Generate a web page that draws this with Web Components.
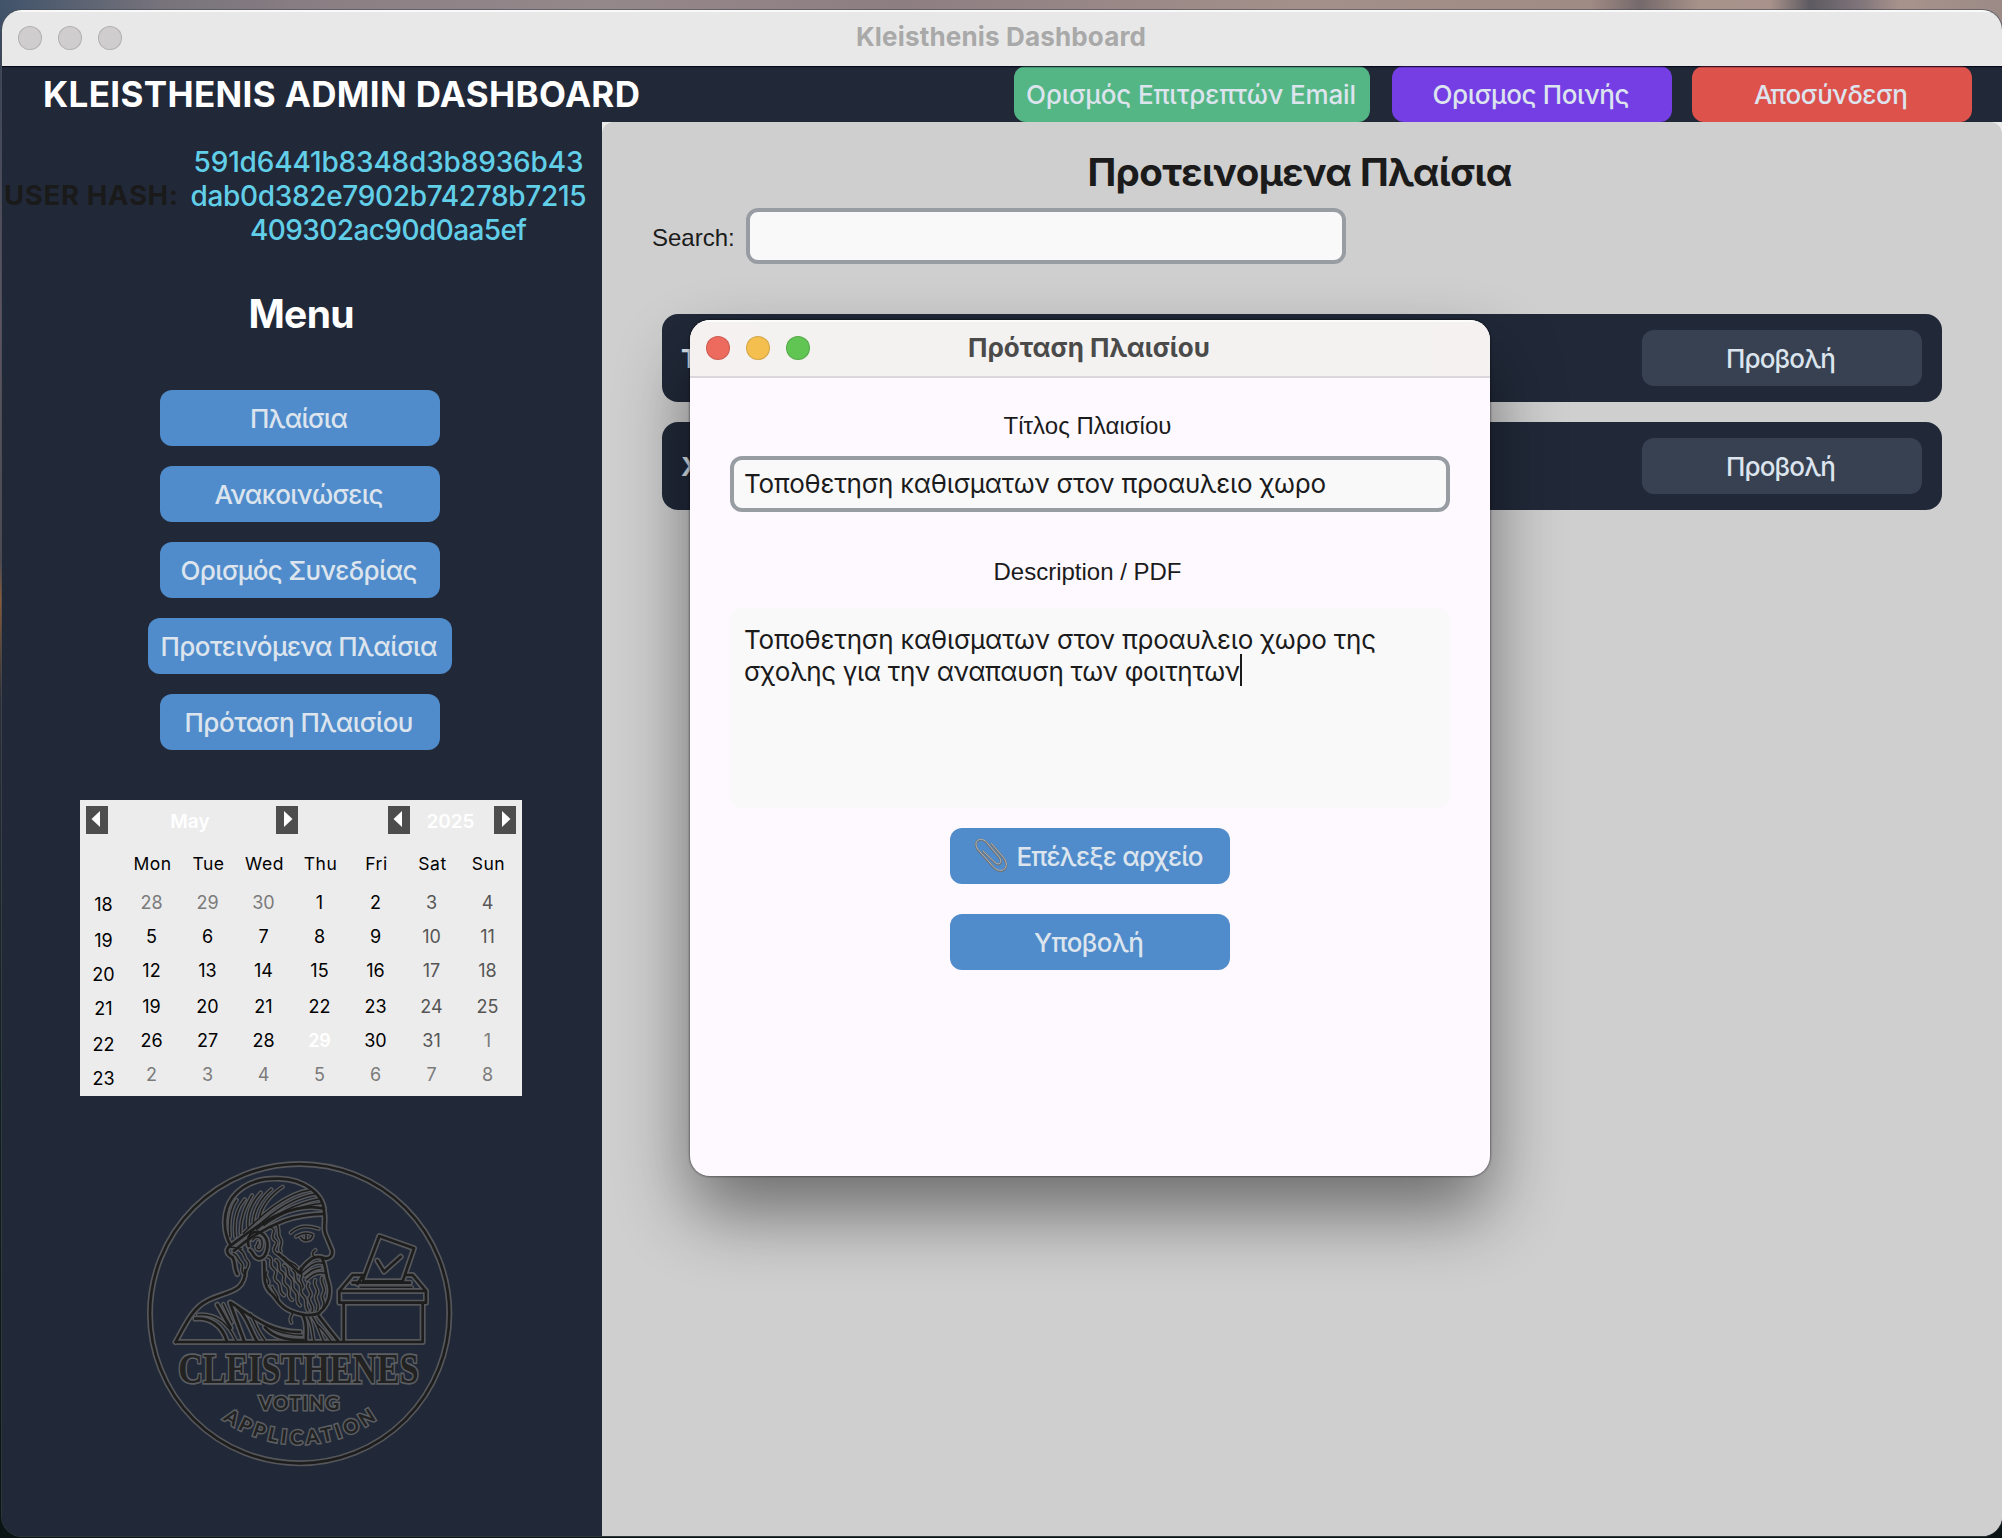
<!DOCTYPE html>
<html lang="el">
<head>
<meta charset="utf-8">
<title>Kleisthenis Dashboard</title>
<style>
html,body{margin:0;padding:0}
body{width:2002px;height:1538px;overflow:hidden;position:relative;font-family:Inter,"Liberation Sans",sans-serif;
background:linear-gradient(180deg,transparent 0,transparent 12px,#3a4458 60px,#5d5560 320px,#4c4a50 560px,#8a5a35 600px,#2b3038 700px,#10201f 1100px,#0a1414 1538px) 0 0/3px 100% no-repeat,
linear-gradient(180deg,transparent 1500px,#0c1516 1510px),
linear-gradient(90deg,#40536a 0,#77737b 160px,#8b7f84 330px,#95888b 600px,#8d7e82 900px,#a3908a 1300px,#a08b84 1590px,#75696b 1640px,#a8938a 1700px,#a8928b 1770px,#5d5a61 1810px,#80757a 1860px,#a8938c 1900px,#9b8a86 2002px)}
</style>
</head>
<body>
<desk-window>
  <title-bar slot="title" label="Kleisthenis Dashboard" w="290" inactive></title-bar>
  <app-header slot="header"></app-header>
  <side-bar slot="side"></side-bar>
  <frames-panel slot="main"></frames-panel>
</desk-window>
<proposal-dialog></proposal-dialog>

<script>
const define = (name, html, init) => customElements.define(name, class extends HTMLElement {
  connectedCallback() {
    if (this.shadowRoot) return;
    const root = this.attachShadow({ mode: 'open' });
    root.innerHTML = typeof html === 'function' ? html(this) : html;
    if (init) init(this, root);
  }
});

/* Single line of text, tracked so that it spans exactly `w` pixels. */
define('fit-text', el => `<style>:host{display:inline-block;vertical-align:top}span{display:block;width:max-content;white-space:pre}</style><span>${el.getAttribute('t')}</span>`, (el, root) => {
  const span = root.querySelector('span');
  const w = +el.getAttribute('w');
  if (!w) return;
  const gap = (w - span.getBoundingClientRect().width) / Math.max(1, el.getAttribute('t').length - 1);
  span.style.letterSpacing = gap + 'px';
  span.style.marginRight = -gap + 'px';
});

define('app-button', el => `
  <style>
    :host{display:flex;align-items:center;justify-content:center;box-sizing:border-box;flex:none;
      width:var(--w,280px);height:56px;border-radius:12px;background:var(--bg,#508ccb);
      color:#dce4ee;font-size:26px;font-weight:450;line-height:54px;padding:2px 2px 0 0}
  </style>
  <slot></slot><fit-text t="${el.getAttribute('label')}" w="${el.getAttribute('w')}"></fit-text>`);

define('title-bar', el => `
  <style>
    :host{display:grid;grid-template-columns:200px 1fr 200px;align-items:center;height:56px;box-sizing:border-box;
      background:${el.hasAttribute('inactive') ? '#e8e8e8' : 'linear-gradient(90deg,#f6f1f1,#f3f2f0 12%,#f3f2f0 90%,#f6f1f1)'};
      box-shadow:inset 0 2px 0 rgba(255,255,255,.75);color:${el.hasAttribute('inactive') ? '#a9a9a9' : '#4a4a4a'};
      font-weight:700;font-size:26px}
    .lights{display:flex;gap:16px;padding-left:16px}
    i{width:24px;height:24px;border-radius:50%;box-sizing:border-box;border:1px solid rgba(0,0,0,.14)}
    .lbl{text-align:center;line-height:32px;margin:${el.hasAttribute('inactive') ? -3 : -1}px 2px 0 0}
  </style>
  <div class="lights">${(el.hasAttribute('inactive') ? ['#cfcdcd', '#cfcdcd', '#cfcdcd'] : ['#ed6a5e', '#f5bf4f', '#61c554'])
    .map(c => `<i style="background:${c}"></i>`).join('')}</div>
  <div class="lbl"><fit-text t="${el.getAttribute('label')}" w="${el.getAttribute('w')}"></fit-text></div>`);

define('desk-window', `
  <style>
    :host{display:flex;flex-direction:column;margin:10px 0 0 2px;height:1526px;border-radius:20px;overflow:hidden;
      background:#212939;box-shadow:0 0 0 1px rgba(70,75,85,.6)}
    .body{display:flex;flex:1}
    slot{display:contents}
  </style>
  <slot name="title"></slot><slot name="header"></slot>
  <div class="body"><slot name="side"></slot><slot name="main"></slot></div>`,
  el => { document.body.style.display = 'flow-root'; });

define('app-header', `
  <style>
    :host{display:flex;height:56px;align-items:center;background:#212939;padding:0 30px 0 41px;color:#fff;position:relative}
    h1{margin:0;font-size:35px;line-height:56px;font-weight:700;flex:1;height:56px}
    .a{--bg:#55b685;--w:356px;margin-right:22px}
    .b{--bg:#743ee4;margin-right:20px}
    .c{--bg:#de524c}
    .line{position:absolute;left:0;right:0;top:0;height:1px;background:rgba(0,0,20,.75)}
    .line::after{content:"";position:absolute;inset:1px 0 -1px;background:rgba(0,0,20,.18)}
  </style>
  <h1><fit-text t="KLEISTHENIS ADMIN DASHBOARD" w="597"></fit-text></h1>
  <app-button class="a" label="Ορισμός Επιτρεπτών Email" w="330"></app-button>
  <app-button class="b" label="Ορισμος Ποινής" w="197"></app-button>
  <app-button class="c" label="Αποσύνδεση" w="154"></app-button>
  <div class="line"></div>`);

define('side-bar', `
  <style>
    :host{display:flex;flex-direction:column;width:600px;background:#212939}
    .hash{display:flex;align-items:center;height:102px;margin-top:23px;padding-left:2px}
    .k{color:#1a1a1a;font-weight:700;font-size:27.500px;width:184px;margin-bottom:3px}
    .v{color:#62cfe9;font-size:28px;font-weight:450;line-height:34px;text-align:center;display:flex;flex-direction:column;align-items:center;width:401px}
    h2{margin:43px 0 0 -1px;text-align:center;color:#fff;font-size:39px;line-height:48px;font-weight:700}
    nav{display:flex;flex-direction:column;align-items:center;gap:20px;margin-top:52px;width:596px}
    cal-month{margin:50px 0 0 78px}
    app-logo{margin:44px 0 0 128px}
  </style>
  <div class="hash"><div class="k"><fit-text t="USER HASH:" w="174"></fit-text></div>
    <div class="v"><fit-text t="591d6441b8348d3b8936b43" w="390"></fit-text><fit-text t="dab0d382e7902b74278b7215" w="396"></fit-text><fit-text t="409302ac90d0aa5ef" w="277"></fit-text></div></div>
  <h2><fit-text t="Menu" w="106"></fit-text></h2>
  <nav>
    <app-button label="Πλαίσια" w="98"></app-button>
    <app-button label="Ανακοινώσεις" w="169"></app-button>
    <app-button label="Ορισμός Συνεδρίας" w="237"></app-button>
    <app-button label="Προτεινόμενα Πλαίσια" w="277" style="--w:304px"></app-button>
    <app-button label="Πρόταση Πλαισίου" w="229"></app-button>
  </nav>
  <cal-month></cal-month>
  <app-logo></app-logo>`);

define('cal-month', () => {
  const days = [28,29,30,1,2,3,4,5,6,7,8,9,10,11,12,13,14,15,16,17,18,19,20,21,22,23,24,25,26,27,28,29,30,31,1,2,3,4,5,6,7,8];
  const cls = i => (i < 3 || i > 33) ? 'o' : i === 31 ? 't' : i % 7 > 4 ? 'w' : '';
  const arrow = d => `<svg width="22" height="28" viewBox="0 0 22 28"><rect width="22" height="28" fill="#4d4d4d"/><path fill="#fff" d="${d}"/></svg>`;
  const L = 'M14 5v16L5.500 13z', R = 'M8 5v16L16.500 13z';
  return `
  <style>
    :host{display:block;width:442px;height:296px;background:#ececec;color:#000;font-size:17.500px;box-sizing:border-box;padding:6px 6px 0}
    .top{display:flex;height:28px;color:#fff;font-weight:600;font-size:19px;line-height:31px;text-align:center}
    svg{flex:none}
    .m{width:168px;box-sizing:border-box;padding-right:4px}.y{width:84px;box-sizing:border-box;padding-right:3px}.gap{width:90px}
    .names{display:grid;grid-template-columns:repeat(7,56px);padding-left:38px;margin-top:19px;line-height:22px;text-align:center;letter-spacing:.5px}
    .names span{margin-left:1px}
    .grid{display:flex;margin-top:16px}
    .wk{display:grid;grid-template-rows:36px 34px 34px 36px 34px 34px;width:37px;margin-top:2px;text-align:center;padding-right:2px;box-sizing:border-box;line-height:24px}
    .d{display:grid;grid-template:34px 34px 36px 34px 34px 34px/repeat(7,56px);text-align:center;line-height:24px;margin-left:.5px}
    .wk,.d{font-size:18px}
    .o{color:#7b7b7b}.w{color:#555}.t{color:#fff;font-weight:600}
  </style>
  <div class="top">${arrow(L)}<span class="m">May</span>${arrow(R)}<span class="gap"></span>${arrow(L)}<span class="y">2025</span>${arrow(R)}</div>
  <div class="names">${['Mon','Tue','Wed','Thu','Fri','Sat','Sun'].map(n => `<span>${n}</span>`).join('')}</div>
  <div class="grid"><div class="wk">${[18,19,20,21,22,23].map(n => `<span>${n}</span>`).join('')}</div>
  <div class="d">${days.map((n, i) => `<span class="${cls(i)}">${n}</span>`).join('')}</div></div>`;
});

define('app-logo', `
  <style>
    :host{display:block;width:340px;height:340px}
    svg{display:block}
    .halo{stroke:#55575a}.ink{stroke:#1d1d1d}
    g{fill:none;stroke-linecap:round;stroke-linejoin:round}
    text{font-weight:700;stroke:#5c5f62;stroke-width:9px;paint-order:stroke;fill:#222}
    .serif{font-family:"Liberation Serif",serif;stroke-width:10px}
    .sans{font-family:Lato,sans-serif}
  </style>
  <svg width="340" height="340" viewBox="0 0 1020 1020">
    <defs>
      <g id="big"><circle cx="509" cy="521" r="449"/>
        <path d="M137 606H878V488M641 490V602M628 453H888V488H628ZM628 453L668 405H700M828 405H848L888 453M668 428H840M682 432L695 412"/>
        <path d="M700 416L748 288L852 325L818 424H700Z"/><path d="M742 362L762 395L812 350"/>
        <path d="M137 606C170 545 192 500 232 482C290 452 345 460 346 390M322 402C310 380 318 368 308 352C286 340 288 326 302 316C276 270 280 210 308 172C340 130 392 114 448 116C520 118 580 160 582 212C588 250 578 262 586 282L606 330C610 348 600 354 588 356"/>
        <path d="M302 316C350 282 400 240 450 222C500 202 545 196 582 206M312 332C360 290 410 262 462 242C510 226 545 222 578 222"/>
        <path d="M356 318C346 282 380 262 402 286C420 306 414 352 388 356C368 354 372 338 360 330"/>
        <path d="M588 356C574 350 560 346 546 356C524 372 512 384 510 400L446 342M574 352C590 376 584 400 596 430C606 470 590 500 566 520C540 532 500 520 480 512C446 500 440 470 420 456C396 430 406 400 402 366"/>
        <path d="M302 488C360 524 420 578 510 576M300 488L342 602M262 494L302 564M320 500C354 530 360 570 380 602M196 536C240 532 276 556 290 602M405 562C430 590 470 602 520 600M518 524C534 550 526 580 528 602M566 528C590 560 606 580 624 602"/>
      </g>
      <g id="fine">
        <path d="M482 278C510 252 540 258 566 266M498 290C520 276 536 278 548 284C546 304 520 306 512 292M528 284V300"/>
        <path d="M300 290C296 250 298 210 320 180M316 290C310 240 320 205 344 178M332 280C330 232 346 200 366 166M354 262C350 220 368 184 392 158M370 250C370 216 390 176 424 148M388 236C394 200 420 166 458 140M340 280C400 220 470 160 540 150M360 280C420 220 490 172 556 162M380 268C430 226 500 188 570 176M402 256C450 220 510 198 576 190"/>
        <path d="M368 300C376 286 396 290 396 308C398 326 388 334 380 326C374 318 386 314 384 306M310 340C326 346 322 360 334 368C344 378 330 388 340 400M330 330C348 340 340 354 352 362C362 372 352 384 348 392M300 322C320 320 326 330 334 326"/>
        <path d="M422 262C446 270 416 290 434 300C452 312 420 324 436 338C452 352 462 346 470 360C480 372 494 368 502 382M440 252C452 268 440 280 450 294C462 310 444 320 452 334M414 350C436 356 412 374 430 386C450 398 422 412 440 424C460 436 440 452 462 466M438 360C458 370 436 384 454 396C474 408 450 422 468 436C488 450 464 466 486 480M462 376C482 384 464 402 480 412C498 426 478 438 494 452C512 466 492 482 510 496M488 390C506 402 488 414 504 428C522 440 504 456 520 468C536 480 520 496 534 512M410 396C400 412 424 420 414 432M426 440C430 456 446 462 444 480"/>
        <path d="M514 400C536 380 556 362 580 370M524 408C542 392 552 386 572 384M530 420C552 398 570 396 584 400M536 430C524 446 552 454 540 470C528 484 556 494 546 514M556 420C546 436 572 448 560 464C548 478 574 490 562 512M576 412C568 430 592 444 580 460C568 476 592 484 578 504M512 384C506 396 520 400 514 412C506 424 524 432 518 444"/>
        <path d="M486 516C492 526 474 530 484 548M362 522C376 548 380 570 404 600M384 540C420 566 450 584 516 586M534 532C548 552 546 580 552 602M548 532C566 556 568 580 580 602M560 552C580 570 592 586 602 602M280 492L306 548M204 524C250 520 290 540 318 602M556 330C546 336 546 344 552 350M690 442H846"/>
      </g>
      <path id="arc" d="M180 735A393 393 0 0 0 838 735"/>
    </defs>
    <g class="halo" stroke-width="18"><use href="#big"/></g>
    <g class="halo" stroke-width="13"><use href="#fine"/></g>
    <g class="ink" stroke-width="8"><use href="#big"/></g>
    <g class="ink" stroke-width="4.500"><use href="#fine"/></g>
    <text class="serif" x="145" y="728" font-size="126" textLength="721" lengthAdjust="spacingAndGlyphs">CLEISTHENES</text>
    <text class="sans" x="386" y="811" font-size="58" textLength="242">VOTING</text>
    <text class="sans" font-size="58" text-anchor="middle"><textPath href="#arc" startOffset="50%" textLength="494">APPLICATION</textPath></text>
  </svg>`);

define('frames-panel', `
  <style>
    :host{display:block;width:1400px;background:#ebebeb}
    .p{display:flex;flex-direction:column;height:100%;background:#cfcfcf;border-radius:12px 12px 0 0;box-sizing:border-box;padding:26px 60px 0}
    h2{margin:0 0 0 -4px;font-size:38.500px;line-height:48px;color:#1b1b1b;text-align:center;font-weight:700}
    .s{display:flex;align-items:center;margin:12px 0 0 -10px;font:24px "Liberation Sans",sans-serif;color:#1b1b1b}
    .s span{width:94px;padding-top:3px}
    .box{width:600px;height:56px;box-sizing:border-box;border:4px solid #979da2;border-radius:12px;background:#f9f9fa}
    frame-row{margin-bottom:20px}
    .rows{margin-top:50px}
  </style>
  <div class="p">
    <h2><fit-text t="Προτεινομενα Πλαίσια" w="425"></fit-text></h2>
    <div class="s"><span>Search:</span><div class="box"></div></div>
    <div class="rows"><frame-row name="Τ"></frame-row><frame-row name="Χ"></frame-row></div>
  </div>`);

define('frame-row', el => `
  <style>
    :host{display:flex;align-items:center;justify-content:space-between;height:88px;box-sizing:border-box;padding:0 20px 0 19px;
      border-radius:16px;background:#212939;color:#dce4ee;font-size:26px;font-weight:700}
    app-button{--bg:#374151}
  </style>
  <span>${el.getAttribute('name')}</span><app-button label="Προβολή" w="110"></app-button>`);

define('proposal-dialog', `
  <style>
    :host{position:absolute;left:690px;top:320px;width:800px;height:856px;border-radius:20px;background:#fdf9ff;
      box-shadow:0 0 2px 1px rgba(0,0,0,.35),0 36px 72px rgba(0,0,0,.48);color:#1b1b1b}
    .in{display:flex;flex-direction:column;align-items:center;height:100%;border-radius:20px;overflow:hidden}
    title-bar{width:100%;border-bottom:0}
    hr{border:0;margin:0;height:2px;width:100%;background:#dad7dc}
    label{font:24px/28px "Liberation Sans",sans-serif;margin-right:5px}
    .t1{margin-top:34px}
    .inp{width:720px;height:56px;box-sizing:border-box;border:4px solid #979da2;border-radius:12px;background:#f9f9fa;
      margin-top:16px;padding-left:10px;font-size:26px;line-height:47px}
    .t2{margin-top:46px}
    .ta{width:720px;height:200px;border-radius:12px;background:#f9f9fa;margin:22px 0 20px;box-sizing:border-box;
      padding:14px;font-size:26px;line-height:35px}
    .l{display:flex;height:32px}
    .caret{width:2px;height:32px;background:#1b1b1b}
    app-button{margin-bottom:30px}
    svg{margin:0 9px 2px -1px}
  </style>
  <div class="in">
    <title-bar label="Πρόταση Πλαισίου" w="242"></title-bar><hr>
    <label class="t1"><fit-text t="Τίτλος Πλαισίου" w="168"></fit-text></label>
    <div class="inp"><fit-text t="Τοποθετηση καθισματων στον προαυλειο χωρο" w="582"></fit-text></div>
    <label class="t2">Description / PDF</label>
    <div class="ta">
      <div class="l"><fit-text t="Τοποθετηση καθισματων στον προαυλειο χωρο της" w="632"></fit-text></div>
      <div class="l"><fit-text t="σχολης για την αναπαυση των φοιτητων" w="496"></fit-text><div class="caret"></div></div>
    </div>
    <app-button label="Επέλεξε αρχείο" w="187">
      <svg width="34" height="36" viewBox="0 0 34 36" fill="none" stroke-linecap="round">
        <g stroke="#6f7174" stroke-width="2.200"><path d="M17.500 6L29.500 20C37 30 28 37 20 30L3.500 11.500C-1.500 3 6.500-1 12 4L25.500 20C29 26 24.500 28 21 25L9 13.500"/></g>
        <g stroke="#b4b5b4" stroke-width="1"><path d="M17.500 5.500L29.500 19.500C37 29.500 28 36.500 20 29.500L3.500 11C-1.500 2.500 6.500-1.500 12 3.500L25.500 19.500C29 25.500 24.500 27.500 21 24.500L9 13"/></g>
      </svg>
    </app-button>
    <app-button label="Υποβολή" w="110"></app-button>
  </div>`);
</script>
</body>
</html>
